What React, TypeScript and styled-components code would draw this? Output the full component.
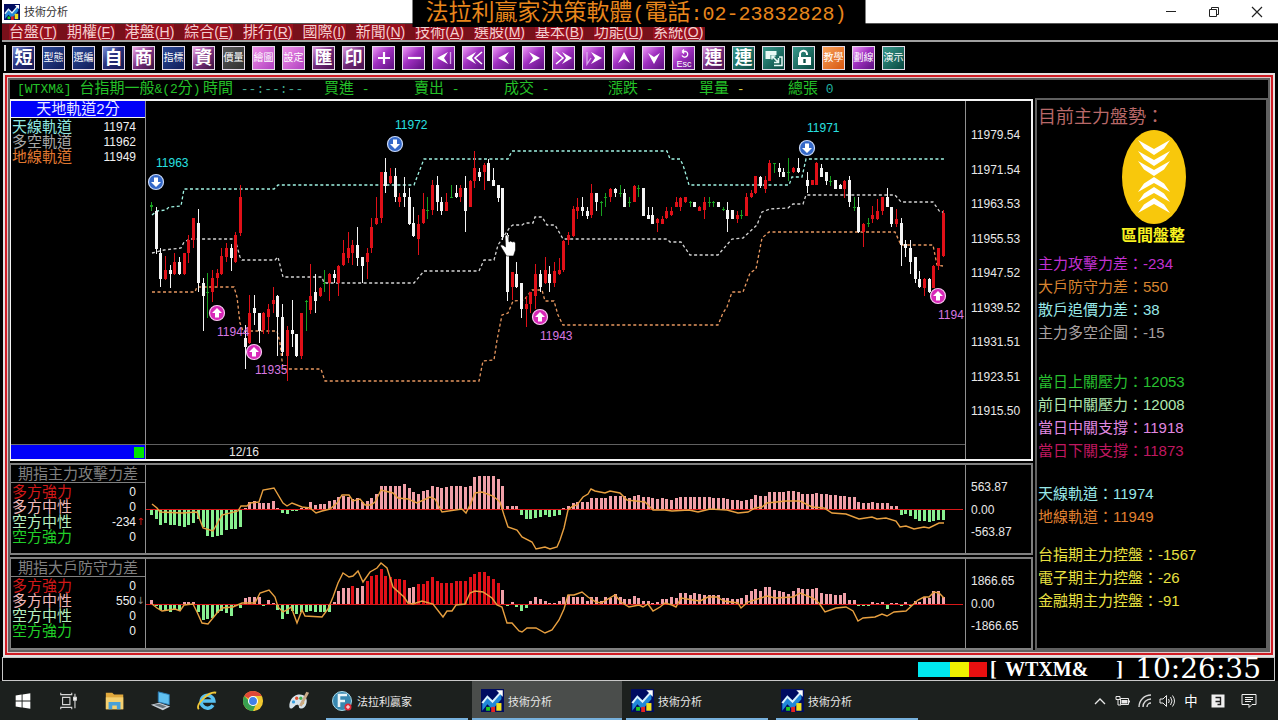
import React from 'react';
import styled, { createGlobalStyle } from 'styled-components';

const CJK = '"Liberation Sans", "Noto Sans CJK TC", sans-serif';
const MONO = '"Liberation Mono", "Noto Sans CJK TC", monospace';

const Global = createGlobalStyle`
  * { box-sizing: border-box; }
  body { margin: 0; background: #000; font-family: ${CJK}; font-size: 12px; color: #fff; }
  button { font-family: inherit; border: 0; padding: 0; background: none; color: inherit; cursor: pointer; }
  svg { display: block; }
  h2, p, dl, dd, dt, ul { margin: 0; padding: 0; font-weight: 400; list-style: none; }
`;

const Page = styled.div`
  position: relative;
  min-height: 100vh;
  display: flex;
  flex-direction: column;
  background: #000;
`;

/* ---------- title bar, banner, menu ---------- */

const TitleBar = styled.header`
  height: 24px;
  margin-left: 2px;
  display: flex;
  align-items: center;
  background: #fff;
  color: #333;
  border-bottom: 1px solid #555;
`;
const AppTitle = styled.h1`
  margin: 0 auto 0 4px;
  font-size: 11px;
  line-height: 16px;
  font-weight: 400;
`;
const WindowButton = styled.button`
  width: 43px;
  height: 23px;
  display: grid;
  place-items: center;
`;
const Banner = styled.div`
  position: absolute;
  top: 0;
  left: 50%;
  transform: translateX(-50%);
  width: 453px;
  height: 27px;
  padding: 2px 13px 0;
  background: #000;
  color: #e8861c;
  font: 23px/24px ${MONO};
  white-space: nowrap;
  overflow: hidden;
`;
const BannerLatin = styled.span`
  font-size: 20px;
`;
const MenuBar = styled.nav`
  height: 18px;
  margin-left: 2px;
  display: flex;
  border-bottom: 2px solid #a0a0a0;
`;
const MenuList = styled.div`
  display: flex;
  gap: 10px;
  height: 16px;
  padding: 0 2px 0 7px;
  background: #78101a;
`;
const MenuButton = styled.button`
  height: 16px;
  font-size: 15px;
  line-height: 16px;
  color: #f4cfd0;
  background: #98101e;
  white-space: nowrap;
  overflow: hidden;
`;
const Accel = styled.span`
  font-size: 14px;
`;

/* ---------- tool bar ---------- */

const ToolBar = styled.div`
  height: 31px;
  display: flex;
  align-items: center;
  gap: 7px;
  padding-left: 4px;
`;
const Grip = styled.span`
  width: 2px;
  height: 26px;
  margin-right: -1px;
  background: #d8d8d8;
`;
type Tone = 'navy' | 'blue' | 'rose' | 'gray' | 'pink' | 'plum' | 'violet' | 'teal' | 'orange';
const tones: Record<Tone, string> = {
  navy: 'linear-gradient(135deg, #2c4a98, #101c58)',
  blue: 'linear-gradient(135deg, #7890d8, #28307c 45%, #141850)',
  rose: 'linear-gradient(135deg, #f0a8e8, #7c3080 50%, #38103c)',
  gray: 'linear-gradient(135deg, #585858, #303030)',
  pink: 'linear-gradient(135deg, #f090e8, #b040c0)',
  plum: 'linear-gradient(135deg, #e098e0, #702878 50%, #48104c)',
  violet: 'linear-gradient(135deg, #f098f8, #a030c0 45%, #5c1080)',
  teal: 'linear-gradient(135deg, #38988c, #084840)',
  orange: 'linear-gradient(135deg, #f8a058, #d85810)',
};
const ToolButton = styled.button<{ $tone: Tone; $small?: boolean }>`
  width: 23px;
  height: 24px;
  display: grid;
  place-items: center;
  border: 1px solid #e4dce8;
  background: ${(p) => tones[p.$tone]};
  color: #fff;
  font-size: ${(p) => (p.$small ? 10 : 18)}px;
  font-weight: ${(p) => (p.$small ? 400 : 700)};
  line-height: 20px;
  white-space: nowrap;
  overflow: hidden;
`;

/* ---------- workspace frame ---------- */

const FrameOuter = styled.main`
  margin: 0 3px;
  flex: 1 0 auto;
  border: 2px solid #e4e0e0;
  display: flex;
`;
const FrameRed = styled.div`
  flex: 1;
  min-width: 0;
  border: 2px solid #d01c24;
  display: flex;
`;
const FrameInner = styled.div`
  flex: 1;
  min-width: 0;
  border: 1px solid #e0c8c8;
  display: flex;
`;
const Workspace = styled.div`
  flex: 1;
  min-width: 0;
  border: 2px solid #606060;
  display: flex;
  flex-direction: column;
`;
const QuoteBar = styled.div`
  height: 19px;
  display: flex;
  align-items: center;
  padding-left: 7px;
  font-family: ${MONO};
  font-size: 15px;
  line-height: 18px;
  color: #24c028;
  white-space: nowrap;
`;
const QuoteName = styled.span`
  width: 186px;
`;
const QuoteItem = styled.span<{ $w: number }>`
  width: ${(p) => p.$w}px;
`;
const Half = styled.span<{ $c?: string }>`
  font-size: 13px;
  white-space: pre;
  color: ${(p) => p.$c ?? 'inherit'};
`;
const Columns = styled.div`
  flex: 1;
  display: flex;
  gap: 2px;
`;
const Panes = styled.div`
  flex: 1;
  min-width: 0;
  display: flex;
  flex-direction: column;
  gap: 2px;
`;
const Pane = styled.section<{ $main?: boolean }>`
  display: flex;
  border: 2px solid ${(p) => (p.$main ? '#f4f4f4' : '#808080')};
  border-left-width: 1px;
`;
const Legend = styled.div`
  width: 135px;
  flex: none;
  display: flex;
  flex-direction: column;
  border-right: 1px solid #909090;
`;
const LegendTitle = styled.h2<{ $active?: boolean }>`
  height: ${(p) => (p.$active ? 17 : 18)}px;
  font-size: 15px;
  line-height: ${(p) => (p.$active ? 16 : 17)}px;
  text-align: center;
  background: ${(p) => (p.$active ? '#0000f8' : 'transparent')};
  color: ${(p) => (p.$active ? '#e8e8ff' : '#808080')};
  border-bottom: 1px solid ${(p) => (p.$active ? '#f4f4f4' : '#808080')};
`;
const LegendRows = styled.dl`
  padding: 1px 0 0 1px;
`;
const LegendRow = styled.div<{ $c: string }>`
  display: flex;
  justify-content: space-between;
  height: 15px;
  color: ${(p) => p.$c};
  dt { font-size: 15px; line-height: 15px; }
  dd { display: flex; color: #f0f0f0; font-size: 12px; line-height: 16px; }
`;
const Trend = styled.span<{ $c: string }>`
  width: 9px;
  text-align: center;
  font-family: "DejaVu Sans", sans-serif;
  font-size: 10px;
  color: ${(p) => p.$c};
`;
const Scroller = styled.div`
  height: 15px;
  margin-top: auto;
  display: flex;
  justify-content: flex-end;
  align-items: center;
  padding-right: 1px;
  border-top: 1px solid #707070;
  background: #0000f8;
`;
const ScrollThumb = styled.span`
  width: 10px;
  height: 11px;
  background: #00e800;
`;
const Plot = styled.div`
  flex: 1;
  min-width: 0;
  border-right: 1px solid #909090;
  svg { width: 100%; }
`;
const DateAxis = styled.div`
  height: 15px;
  padding-left: 83px;
  border-top: 1px solid #606060;
  line-height: 15px;
  color: #e8e8e8;
`;
const Axis = styled.ul<{ $tall?: boolean }>`
  width: 65px;
  flex: none;
  height: ${(p) => (p.$tall ? 320 : 78)}px;
  padding: ${(p) => (p.$tall ? 24 : 11)}px 0 0 5px;
  display: flex;
  flex-direction: column;
  justify-content: space-between;
  color: #e8e8e8;
  line-height: ${(p) => (p.$tall ? 20 : 22)}px;
`;

/* ---------- side panel ---------- */

const Side = styled.aside`
  width: 233px;
  flex: none;
  margin-top: -1px;
  border: 2px solid #606060;
  padding: 7px 0 0 1px;
`;
const SideTitle = styled.h2`
  font-size: 18px;
  line-height: 20px;
  color: #b86868;
`;
const Badge = styled.figure`
  width: 70px;
  margin: 3px 0 0 80px;
  text-align: center;
`;
const BadgeName = styled.figcaption`
  font-size: 16px;
  line-height: 24px;
  font-weight: 700;
  color: #f8f020;
  white-space: nowrap;
`;
const Group = styled.div<{ $top: number }>`
  margin-top: ${(p) => p.$top}px;
  font-size: 15px;
  line-height: 23px;
  white-space: nowrap;
`;
const Reading = styled.p<{ $c: string }>`
  color: ${(p) => p.$c};
`;

/* ---------- status and task bar ---------- */

const StatusBar = styled.footer`
  height: 24px;
  margin: 0 3px 0 2px;
  display: flex;
  justify-content: flex-end;
  align-items: center;
  border: 1px solid #c8c8c8;
  padding-right: 13px;
  white-space: nowrap;
`;
const Lamp = styled.span<{ $c: string; $w: number }>`
  width: ${(p) => p.$w}px;
  height: 15px;
  background: ${(p) => p.$c};
`;
const Contract = styled.span`
  width: 133px;
  margin-left: 3px;
  display: flex;
  justify-content: space-between;
  font: 700 20px/22px "Liberation Serif", serif;
  b { width: 103px; }
`;
const Clock = styled.time`
  width: 138px;
  text-align: right;
  font: 28px/22px "DejaVu Serif", serif;
`;
const TaskBar = styled.div`
  height: 39px;
  display: flex;
  background: #1c201e;
`;
const Launch = styled.button`
  width: 46px;
  display: grid;
  place-items: center;
`;
const Tasks = styled.div`
  display: flex;
  margin-right: auto;
`;
const Task = styled.button<{ $active?: boolean }>`
  width: 150px;
  display: flex;
  align-items: center;
  gap: 4px;
  padding-left: 9px;
  font-size: 11px;
  color: #e8e8e8;
  background:
    linear-gradient(#76b0dc, #76b0dc) ${(p) => (p.$active ? '0 100% / 150px 2px' : '4px 100% / 142px 2px')} no-repeat
    ${(p) => (p.$active ? '#4a4d4b' : 'transparent')};
`;
const Tray = styled.div`
  display: flex;
  align-items: center;
  padding-right: 12px;
  font-size: 12px;
`;
const TrayButton = styled.button<{ $w: number }>`
  width: ${(p) => p.$w}px;
  height: 30px;
  display: grid;
  place-items: center;
`;

/* ---------- data ---------- */

const menus: [string, string][] = [
  ['台盤', 'T'], ['期權', 'F'], ['港盤', 'H'], ['綜合', 'E'], ['排行', 'R'], ['國際', 'I'],
  ['新聞', 'N'], ['技術', 'A'], ['選股', 'M'], ['基本', 'B'], ['功能', 'U'], ['系統', 'O'],
];

type Glyph = 'plus' | 'minus' | 'first' | 'back2' | 'back' | 'fwd' | 'fwd2' | 'last' | 'up' | 'down' | 'esc' | 'swap' | 'lock';
const tools: { t?: string; g?: Glyph; tone: Tone }[] = [
  { t: '短', tone: 'blue' }, { t: '型態', tone: 'navy' }, { t: '選編', tone: 'navy' }, { t: '自', tone: 'blue' },
  { t: '商', tone: 'rose' }, { t: '指標', tone: 'navy' }, { t: '資', tone: 'rose' }, { t: '價量', tone: 'gray' },
  { t: '繪圖', tone: 'pink' }, { t: '設定', tone: 'pink' }, { t: '匯', tone: 'plum' }, { t: '印', tone: 'plum' },
  { g: 'plus', tone: 'violet' }, { g: 'minus', tone: 'violet' }, { g: 'first', tone: 'violet' },
  { g: 'back2', tone: 'violet' }, { g: 'back', tone: 'violet' }, { g: 'fwd', tone: 'violet' },
  { g: 'fwd2', tone: 'violet' }, { g: 'last', tone: 'violet' }, { g: 'up', tone: 'violet' },
  { g: 'down', tone: 'violet' }, { g: 'esc', tone: 'violet' }, { t: '連', tone: 'plum' },
  { t: '連', tone: 'teal' }, { g: 'swap', tone: 'teal' }, { g: 'lock', tone: 'teal' },
  { t: '教學', tone: 'orange' }, { t: '劃線', tone: 'violet' }, { t: '演示', tone: 'teal' },
];

// One candle per entry: colour, high, body top, body bottom, low (thirds of a pixel below the 110 line).
const candles = `G275,285,290,302 W290,302,416,432 W415,430,508,532 R438,480,508,510 W465,480,493,533 R430,455,493,495
W440,455,493,495 R428,430,493,495 R375,390,430,460 R325,325,390,413 W298,340,520,545 W505,518,557,662 G490,545,548,625
R480,505,547,575 R478,490,505,532 R413,437,493,495 R400,415,440,455 W403,415,443,483 R367,375,455,460 R225,262,368,378
W645,685,712,776 R555,610,700,702 W555,595,610,645 W610,610,662,698 R607,610,660,672 R583,597,620,672 R532,570,582,610
W555,557,622,738 W583,622,725,738 R648,660,738,812 W570,660,673,712 W672,672,738,740 R608,610,738,748 G570,573,576,662
R462,558,600,612 W492,545,572,610 R530,533,557,560 G480,518,521,545 R490,492,518,572 W480,492,505,520 R465,467,518,557
R390,430,465,467 R365,415,443,460 R390,405,430,465 W350,405,443,467 W440,440,467,520 R415,428,455,508 R325,350,415,430
R260,325,342,345 R185,185,325,340 W145,185,227,250 R175,198,220,222 W175,198,262,277 R248,262,275,290 W200,250,262,290
W235,262,342,344 W290,340,378,380 R315,342,388,435 R248,298,340,342 G262,300,303,328 R210,225,300,315 W198,225,275,302
W262,275,302,315 R250,277,302,304 G225,262,265,265 W225,250,262,264 R225,235,262,277 W198,235,302,365 R210,212,290,292
R122,173,212,235 W175,185,200,212 R160,165,185,240 W148,160,212,214 W175,210,227,229 W225,225,265,277 W235,235,380,390
W370,375,547,573 R485,487,532,570 W455,492,532,534 W520,520,597,623 R558,582,597,652 R545,547,583,610 R463,492,557,597
W480,492,532,545 R440,480,520,522 W467,492,520,545 R455,482,520,532 R443,480,493,495 R390,392,480,485 R367,375,390,405
R288,298,378,380 R265,290,303,328 W262,290,302,318 W290,302,318,328 R222,250,315,325 W250,250,275,302 G273,275,278,318
G250,262,265,290 R235,238,262,275 W235,237,250,262 G225,250,253,262 W237,250,290,292 G262,275,278,290 R225,227,275,277
G225,235,238,262 W235,235,317,318 W290,315,327,328 W290,315,341,342 R325,327,340,365 R318,327,341,342 R292,302,325,327
R290,302,315,317 R262,275,290,292 R262,265,290,302 R262,262,277,278 G273,275,278,290 W275,275,290,291 R288,290,302,303
R262,275,300,328 G262,275,278,290 G273,275,278,290 W277,277,290,291 G290,298,301,302 W275,300,327,365 W300,300,327,328
R302,315,328,340 G300,315,318,328 R250,262,317,318 R240,248,262,263 R198,198,250,251 W198,200,227,235 R198,210,237,250
R150,160,212,213 G160,160,163,190 W160,173,187,200 W173,185,200,201 G145,185,188,212 R170,175,187,188 W145,175,187,188
- W185,210,227,250 R210,210,225,226 R155,160,225,226 W162,175,200,201 W185,185,212,225 G198,212,215,228 W210,210,237,238
W223,225,237,238 R210,212,237,265 W198,210,275,290 G262,290,293,302 W262,290,367,368 R340,342,367,410 G325,340,343,352
R288,315,328,340 R267,302,328,330 R262,262,302,315 W235,260,290,291 W290,290,342,352 R298,328,342,352 W325,340,405,467
W390,402,415,440 W390,415,455,493 W440,442,507,520 W482,507,532,533 R503,507,533,557 W503,507,547,548 R465,467,533,534
R413,415,467,480 R300,308,437,440`.split(/\s+/);

const upperBand = '152,215 157,211 166,210 169,207 181,206 184,189 274,189 278,185 414,185 424,159 508,159 512,151 667,151 670,159 680,159 683,165 687,178 689,185 789,185 792,177 802,177 806,159 944,159';
const middleBand = '152,253 164,250 181,248 184,242 190,239 235,239 240,257 242,260 275,260 278,257 283,277 322,277 324,283 414,283 424,271 479,271 484,260 494,260 498,245 510,227 513,225 522,225 525,223 533,223 535,217 542,217 547,225 555,225 563,239 667,239 670,242 681,242 690,255 718,255 732,239 743,238 757,225 762,212 770,209 788,208 793,204 803,204 806,195 895,195 901,202 933,202 940,212 943,212';
const lowerBand = '152,292 195,292 197,287 234,287 237,297 240,323 243,331 277,331 280,343 283,369 321,369 325,381 479,381 483,361 494,360 497,340 502,315 508,313 513,301 524,300 532,290 542,290 545,301 554,301 558,315 563,325 718,325 723,313 727,307 732,292 743,292 750,273 756,269 762,238 769,232 895,232 901,245 933,245 937,265 943,266';

const attackBars = [
  -14, -28, -46, -40, -46, -46, -48, -50, -44, -38, -28, -50, -78, -80, -78, -76, -60, -56, -58, -52,
  3, 20, 23, 17, 17, 17, 24, 4, -8, -12, -4, -3, 3, 5, 20, 12, 14, 16, 24, 28,
  36, 40, 36, 30, 32, 22, 24, 32, 45, 68, 70, 70, 70, 68, 76, 64, 52, 46, 54, 57,
  68, 66, 64, 66, 68, 69, 70, 66, 70, 97, 100, 100, 100, 100, 90, 68, 10, 10, 10, -14,
  -26, -26, -23, -22, -16, -20, -17, -15, 4, 10, 18, 20, 22, 22, 34, 33, 32, 34, 38, 38,
  38, 38, 34, 40, 43, 35, 35, 32, 30, 33, 30, 28, 34, 35, 35, 35, 35, 35, 35, 35,
  34, 33, 33, 30, 28, 26, 25, 28, 30, 43, 40, 40, 52, 52, 52, 52, 55, 55, 52, 46,
  44, 44, 47, 46, 44, 43, 43, 40, 38, 37, 35, 22, 18, 18, 20, 18, 18, 18, 10, 10,
  -14, -12, -18, -26, -32, -34, -36, -32, -30, -30,
];
const defendBars = [
  12, -3, -14, -18, -20, -16, -18, 5, 6, 6, -20, -44, -42, -40, -24, -18, -24, -32, -3, -10,
  18, 20, 22, 20, -3, 12, 4, -16, -42, -28, -18, -26, -20, -22, -18, -22, -22, -22, -20, 6,
  40, 48, 48, 54, 48, 54, 68, 84, 88, 105, 84, 82, 74, 74, 72, 48, 50, 60, 60, 68,
  82, 68, 62, 62, 62, 68, 70, 68, 80, 90, 95, 96, 84, 74, 62, 42, -3, 6, -6, -18,
  -10, 8, 20, 16, 10, 4, 4, 8, 22, 26, 22, 22, 20, 10, 22, 20, 10, 20, 18, 30,
  22, 16, 14, 24, 18, 10, 10, 3, 6, 14, 16, 20, 18, 32, 32, 26, 32, 30, 26, 28,
  26, 26, 18, 18, 14, 16, 18, 26, 38, 46, 38, 52, 52, 42, 38, 36, 30, 38, 48, 46,
  44, 44, 48, 34, 30, 30, 28, 28, 32, 12, 12, -4, -3, -3, 7, 3, 5, -12, 2, 3,
  -3, 6, -3, 8, 6, 20, 18, 40, 40, 22,
];
const attackLine = '152,504 157,508 160,512 182,513 197,512 203,528 213,531 222,515 238,511 241,506 247,506 250,503 259,502 263,490 274,488 283,503 287,506 292,503 302,507 310,508 316,513 322,511 330,509 337,503 342,495 349,495 353,501 360,499 365,505 371,505 375,502 381,490 393,493 398,498 408,499 417,503 430,497 435,499 442,512 462,509 466,513 471,503 475,493 482,492 493,496 500,502 504,515 508,527 517,530 522,537 532,542 536,549 545,547 550,549 557,547 560,540 564,528 568,510 573,506 577,505 583,497 588,494 591,489 595,491 605,493 610,491 620,493 627,500 645,502 653,510 665,510 672,511 689,510 698,512 710,509 727,510 738,513 748,512 755,508 762,507 767,503 786,501 800,501 812,507 824,508 832,513 846,514 859,519 872,517 877,519 886,518 896,521 900,527 906,526 914,529 924,527 929,528 939,523 944,523';
const defendLine = '152,604 157,608 162,611 175,609 180,611 184,605 193,604 197,612 202,623 208,624 217,613 222,608 233,607 242,603 255,603 260,593 269,590 275,597 278,607 283,612 287,610 291,607 293,612 297,623 302,610 305,616 322,617 328,609 333,597 338,583 343,573 349,577 353,576 358,571 363,582 370,572 377,568 381,563 387,568 393,587 404,597 408,603 413,604 422,601 433,604 443,617 447,611 452,611 456,605 465,604 470,593 475,591 483,592 492,598 497,605 502,607 507,623 512,623 519,631 522,632 527,628 536,628 545,633 552,630 559,620 564,609 568,595 574,595 582,592 588,597 596,602 601,603 615,595 621,602 629,607 639,605 643,607 648,604 653,611 660,607 665,603 672,605 676,607 681,598 693,600 700,601 708,597 717,597 724,601 738,603 741,608 748,602 767,596 775,598 793,597 800,593 813,598 819,603 825,612 836,608 846,607 853,611 858,621 863,618 875,617 882,614 887,616 894,612 906,611 918,600 924,597 929,597 934,592 939,593 944,598';

const slotX = (i: number) => Math.round(150 + i * 4.685);
const candleColor: Record<string, string> = { R: '#e01018', W: '#f4f4f4', G: '#18a020' };

/* ---------- drawings ---------- */

const AppIcon = ({ size = 16 }: { size?: number }) => (
  <svg width={size} height={size} viewBox="0 0 18 18">
    <rect width="18" height="18" fill="#000c60" />
    <path d="M1 12 5 7l4 4 7-8v5l-7 8-4-4-4 5z" fill="#2088d8" />
    <path d="M1 11 5 6l4 4 7-8" fill="none" stroke="#d8f4ff" strokeWidth="1.600" />
    <path d="M12 1h5v5z" fill="#fff" />
    <rect x="4" y="14" width="3" height="3" fill="#20d020" />
    <rect x="8" y="14" width="3" height="4" fill="#e82020" />
    <rect x="12" y="11" width="4" height="6" fill="#f0e020" />
  </svg>
);

const glyphPaths: Record<Exclude<Glyph, 'esc' | 'swap' | 'lock'>, React.ReactNode> = {
  plus: <path d="M10 4v12M4 10h12" stroke="#fff" strokeWidth="2.200" />,
  minus: <path d="M4 10h13" stroke="#fff" strokeWidth="2.200" />,
  first: <><path d="M14 4 3 10l11 6-4-6z" fill="#fff" /><path d="M16.500 4v12" stroke="#d8a8e8" strokeWidth="1.300" /></>,
  back2: <><path d="M12 4 2 10l10 6-4-6z" fill="#fff" /><path d="m18 4-7 6 7 6" fill="none" stroke="#fff" strokeWidth="1.600" /></>,
  back: <path d="M15 4 4 10l11 6-4-6z" fill="#fff" />,
  fwd: <path d="m5 4 11 6-11 6 4-6z" fill="#fff" />,
  fwd2: <><path d="m8 4 10 6-10 6 4-6z" fill="#fff" /><path d="m2 4 7 6-7 6" fill="none" stroke="#fff" strokeWidth="1.600" /></>,
  last: <><path d="m7 4 11 6-11 6 4-6z" fill="#fff" /><path d="M3 4v12l4-6" fill="none" stroke="#d8a8e8" strokeWidth="1.300" /></>,
  up: <path d="m4 15 6-11 6 11-6-4z" fill="#fff" />,
  down: <path d="m4 5 6 11 6-11-6 4z" fill="#fff" />,
};

const ToolGlyph = ({ g }: { g: Glyph }) => {
  if (g === 'esc')
    return (
      <svg width="20" height="20" viewBox="0 0 20 20">
        <path d="M8 3.500h4a3 3 0 1 1-4 4M8 3.500l2-2m-2 2 2 2" fill="none" stroke="#fff" strokeWidth="1.300" />
        <text x="10" y="19" fontSize="9" fill="#fff" textAnchor="middle" fontWeight="400">Esc</text>
      </svg>
    );
  if (g === 'swap')
    return (
      <svg width="20" height="20" viewBox="0 0 20 20" fill="none">
        <path d="M1.500 3h11v4h-6v4h-5z" fill="#e8f8f4" />
        <path d="M10 17.500h8V9h-3" stroke="#e8f8f4" strokeWidth="1.500" />
        <path d="m8 8 6.500 6.500M14.500 10v4.500H10M8 11.500V8h3.500" stroke="#e8f8f4" strokeWidth="1.600" />
      </svg>
    );
  if (g === 'lock')
    return (
      <svg width="20" height="20" viewBox="0 0 20 20">
        <path d="M6 10V6.500a3.500 3.500 0 0 1 7-.5v1" fill="none" stroke="#fff" strokeWidth="2" />
        <rect x="4" y="9" width="13" height="8" fill="#fff" />
        <path d="M10.500 11v4" stroke="#0c5048" strokeWidth="2.400" />
      </svg>
    );
  return <svg width="20" height="20" viewBox="0 0 20 20">{glyphPaths[g]}</svg>;
};

const Marker = ({ x, y, down }: { x: number; y: number; down?: boolean }) => (
  <g transform={`translate(${x} ${y})`}>
    <circle r="7.500" fill={down ? '#3468c8' : '#d828b8'} stroke={down ? '#c8d8f8' : '#f8c8f0'} strokeWidth="1.200" />
    <path d="M-2-4.500h4V0h3L0 5-5 0h3z" fill="#fff" transform={down ? undefined : 'rotate(180)'} />
  </g>
);

const PriceChart = () => (
  <svg height="343" viewBox="146 101 819 343" fontSize="12" role="img" aria-label="天地軌道2分">
    <g fill="none" strokeWidth="1.300" strokeDasharray="3 2.500">
      <polyline points={upperBand} stroke="#a0f4e4" />
      <polyline points={middleBand} stroke="#d4d4d4" />
      <polyline points={lowerBand} stroke="#e89860" />
    </g>
    <g shapeRendering="crispEdges">
      {candles.map((c, i) => {
        if (c === '-') return null;
        const [hi, top, bottom, lo] = c.slice(1).split(',').map((v) => Math.round(110 + Number(v) / 3));
        const x = slotX(i);
        const fill = candleColor[c[0]];
        return (
          <g key={i} fill={fill}>
            <rect x={x + 1} y={hi} width="1" height={Math.max(1, lo - hi)} />
            <rect x={x} y={top} width="3" height={Math.max(1, bottom - top)} />
          </g>
        );
      })}
    </g>
    <Marker x={156} y={182} down />
    <Marker x={395} y={144} down />
    <Marker x={807} y={148} down />
    <Marker x={217} y={313} />
    <Marker x={254} y={352} />
    <Marker x={540} y={317} />
    <Marker x={938} y={296} />
    <g fill="#28e0e0">
      <text x="156" y="167">11963</text>
      <text x="395" y="129">11972</text>
      <text x="807" y="132">11971</text>
    </g>
    <g fill="#d878e0">
      <text x="217" y="336">11944</text>
      <text x="255" y="374">11935</text>
      <text x="540" y="340">11943</text>
      <text x="938" y="319">1194</text>
    </g>
    <path
      d="M505 236q1.500-2 3 0l1 6 1.500-1 2 1 1.500-.5 1.500 1.500v7l-2 6h-7l-3-5-3-5q1-2 3-.5l2 1.500z"
      fill="#fff" stroke="#000" strokeWidth=".6"
    />
  </svg>
);

type IndicatorProps = {
  top: number; height: number; zero: number; bars: number[]; line: string; label: string; strong?: (i: number) => boolean;
};
const IndicatorChart = ({ top, height, zero, bars, line, label, strong }: IndicatorProps) => (
  <svg height={height} viewBox={`146 ${top} 819 ${height}`} role="img" aria-label={label}>
    <g shapeRendering="crispEdges">
      {bars.map((v, i) => {
        const h = Math.max(1, Math.round(Math.abs(v) / 3));
        return (
          <rect
            key={i} x={slotX(i)} width="3" height={h} y={v > 0 ? zero - h : zero + 1}
            fill={v < 0 ? '#88f090' : strong?.(i) ? '#e01018' : '#f0a0a8'}
          />
        );
      })}
      <rect x="146" y={zero} width="817" height="1" fill="#d81818" />
    </g>
    <polyline points={line} fill="none" stroke="#e8a040" strokeWidth="1.400" />
  </svg>
);

const isStrong = (i: number) => i === 43 || (i >= 46 && i <= 54) || (i >= 57 && i <= 74);

const forces: [string, string][] = [
  ['多方強力', '#d01818'], ['多方中性', '#f0b8b8'], ['空方中性', '#b8f0c0'], ['空方強力', '#20d028'],
];

const ForceLegend = ({ title, values, arrowAt, arrow }: { title: string; values: string[]; arrowAt: number; arrow: React.ReactNode }) => (
  <Legend>
    <LegendTitle>{title}</LegendTitle>
    <LegendRows>
      {forces.map(([name, color], i) => (
        <LegendRow key={name} $c={color}>
          <dt>{name}</dt>
          <dd>{values[i]}{i === arrowAt ? arrow : <Trend $c="inherit" />}</dd>
        </LegendRow>
      ))}
    </LegendRows>
  </Legend>
);

const readings: { top: number; rows: [string, string][] }[] = [
  { top: 4, rows: [['主力攻擊力差：-234', '#c030d0'], ['大戶防守力差：550', '#d88430'], ['散戶追價力差：38', '#98e8e8'], ['主力多空企圖：-15', '#a8a0a0']] },
  { top: 26, rows: [['當日上關壓力：12053', '#28c030'], ['前日中關壓力：12008', '#b0e8b0'], ['當日中關支撐：11918', '#e088e0'], ['當日下關支撐：11873', '#c01860']] },
  { top: 20, rows: [['天線軌道：11974', '#98e8e8'], ['地線軌道：11949', '#e08030']] },
  { top: 15, rows: [['台指期主力控盤：-1567', '#e8e040'], ['電子期主力控盤：-26', '#e8e040'], ['金融期主力控盤：-91', '#e8e040']] },
];

const launchers: { name: string; art: React.ReactNode }[] = [
  { name: '開始', art: <path d="M4 6 10.500 5V11.500H4zM11.500 4.800 20 3.500V11.500H11.500zM4 12.500H10.500V19L4 18zM11.500 12.500H20V20.500L11.500 19.200z" fill="#fff" /> },
  {
    name: '工作檢視',
    art: <g fill="none" stroke="#d8d8d8" strokeWidth="1.200"><path d="M5 8h8v8H5zM3 3v2h12V3M3 21v-2h12v2M18.500 4v16" /><path d="M17 8h3v3h-3z" fill="#fff" /></g>,
  },
  {
    name: '檔案總管',
    art: <g><path d="M2 3h7l2 2h10v16H2z" fill="#e0a83c" /><path d="M2 8h19v13H2z" fill="#f4d070" /><path d="M5 21v-8h13v8h-4v-4H9v4z" fill="#48a0d8" /></g>,
  },
  {
    name: '電腦',
    art: <g><path d="m9 2 12 3v11L9 13z" fill="#60c0f0" stroke="#2878b0" /><path d="m1 16 9-2 12 4-8 4z" fill="#c8d0d8" /><path d="m4 16 6-1 8 3-4 2z" fill="#68747c" /></g>,
  },
  {
    name: 'Internet Explorer',
    art: <g fill="none"><path d="M18.500 16.500a7 7 0 1 1 1-4.500H7" stroke="#58c0f0" strokeWidth="3.800" /><path d="M3 21C-1 16 14 1 22 3" stroke="#f0c838" strokeWidth="2" /></g>,
  },
  {
    name: 'Chrome',
    art: (
      <g>
        <circle cx="12" cy="12" r="11" fill="#f0c830" />
        <path d="M12 12 2.500 6.500A11 11 0 0 1 21.500 6.500H12z" fill="#e04838" />
        <path d="M2.500 6.500A11 11 0 0 0 12 23l4-9-4 2z" fill="#38a050" />
        <circle cx="12" cy="12" r="5.500" fill="#fff" /><circle cx="12" cy="12" r="4.300" fill="#4080e8" />
      </g>
    ),
  },
  {
    name: '小畫家',
    art: (
      <g>
        <path d="M11 5c7-1 11 4 9 10-1 4-4 6-7 5-2-1 0-4-3-4s-4 5-8 4c-2-5 2-14 9-15z" fill="#d8e4ec" />
        <circle cx="6" cy="13" r="1.800" fill="#38a0e0" /><circle cx="9.500" cy="9" r="1.800" fill="#e05030" />
        <circle cx="14" cy="9" r="1.800" fill="#40b050" /><circle cx="16" cy="14" r="1.800" fill="#e8b830" />
        <path d="m12 17 8-15 3 1-8 15z" fill="#c8a888" />
      </g>
    ),
  },
];

export default function App() {
  return (
    <Page>
      <Global />
      <TitleBar>
        <svg width="2" height="16" aria-hidden="true" />
        <AppIcon />
        <AppTitle>技術分析</AppTitle>
        <WindowButton aria-label="最小化"><svg width="12" height="12"><path d="M1 5.500h10" stroke="#222" /></svg></WindowButton>
        <WindowButton aria-label="還原">
          <svg width="12" height="12" fill="none" stroke="#222"><path d="M1.500 3.500h7v7h-7zM3.500 3V1.500h7v7H9" /></svg>
        </WindowButton>
        <WindowButton aria-label="關閉"><svg width="12" height="12"><path d="m1 1 10 10M11 1 1 11" stroke="#222" strokeWidth="1.200" /></svg></WindowButton>
      </TitleBar>
      <MenuBar>
        <MenuList>
          {menus.map(([name, key]) => (
            <MenuButton key={name}>{name}<Accel>(<u>{key}</u>)</Accel></MenuButton>
          ))}
        </MenuList>
      </MenuBar>
      <Banner>
        法拉利贏家決策軟體<BannerLatin>(</BannerLatin>電話<BannerLatin>:02-23832828)</BannerLatin>
      </Banner>

      <ToolBar>
        <Grip />
        {tools.map((tool, i) => (
          <ToolButton key={i} $tone={tool.tone} $small={tool.t?.length === 2} aria-label={tool.t ?? tool.g}>
            {tool.t ?? <ToolGlyph g={tool.g!} />}
          </ToolButton>
        ))}
      </ToolBar>

      <FrameOuter><FrameRed><FrameInner>
        <Workspace>
          <QuoteBar>
            <QuoteName><Half>{'[WTXM&] '}</Half>台指期一般<Half>&(2</Half>分<Half>)</Half></QuoteName>
            <QuoteItem $w={121}>時間<Half $c="#40a890">{' --:--:--'}</Half></QuoteItem>
            <QuoteItem $w={90}>買進<Half>{' -'}</Half></QuoteItem>
            <QuoteItem $w={90}>賣出<Half>{' -'}</Half></QuoteItem>
            <QuoteItem $w={104}>成交<Half>{' -'}</Half></QuoteItem>
            <QuoteItem $w={91}>漲跌<Half>{' -'}</Half></QuoteItem>
            <QuoteItem $w={89}>單量<Half $c="#d8d040">{' -'}</Half></QuoteItem>
            <QuoteItem $w={60}>總張<Half $c="#20b0a0">{' 0'}</Half></QuoteItem>
          </QuoteBar>
          <Columns>
            <Panes>
              <Pane $main>
                <Legend>
                  <LegendTitle $active>天地軌道2分</LegendTitle>
                  <LegendRows>
                    <LegendRow $c="#90e8e0"><dt>天線軌道</dt><dd>11974<Trend $c="inherit" /></dd></LegendRow>
                    <LegendRow $c="#a8a8a8"><dt>多空軌道</dt><dd>11962<Trend $c="inherit" /></dd></LegendRow>
                    <LegendRow $c="#e07830"><dt>地線軌道</dt><dd>11949<Trend $c="inherit" /></dd></LegendRow>
                  </LegendRows>
                  <Scroller><ScrollThumb /></Scroller>
                </Legend>
                <Plot>
                  <PriceChart />
                  <DateAxis>12/16</DateAxis>
                </Plot>
                <Axis $tall>
                  {['11979.54', '11971.54', '11963.53', '11955.53', '11947.52', '11939.52', '11931.51', '11923.51', '11915.50'].map((v) => (
                    <li key={v}>{v}</li>
                  ))}
                </Axis>
              </Pane>
              <Pane>
                <ForceLegend title="期指主力攻擊力差" values={['0', '0', '-234', '0']} arrowAt={2} arrow={<Trend $c="#d01818">↑</Trend>} />
                <Plot>
                  <IndicatorChart top={465} height={88} zero={509} bars={attackBars} line={attackLine} label="期指主力攻擊力差" />
                </Plot>
                <Axis><li>563.87</li><li>0.00</li><li>-563.87</li></Axis>
              </Pane>
              <Pane>
                <ForceLegend title="期指大戶防守力差" values={['0', '550', '0', '0']} arrowAt={1} arrow={<Trend $c="#909090">↓</Trend>} />
                <Plot>
                  <IndicatorChart top={559} height={89} zero={604} bars={defendBars} line={defendLine} label="期指大戶防守力差" strong={isStrong} />
                </Plot>
                <Axis><li>1866.65</li><li>0.00</li><li>-1866.65</li></Axis>
              </Pane>
            </Panes>
            <Side>
              <SideTitle>目前主力盤勢：</SideTitle>
              <Badge>
                <svg width="70" height="94" viewBox="0 0 70 94">
                  <ellipse cx="36" cy="47" rx="32" ry="47" fill="#f8c80c" />
                  <g fill="#fff">
                    {[10, 21, 31].map((y) => <path key={y} d={`M20 ${y}l16 9 16-9-6 8.500L36 ${y + 15}l-10-6.500z`} />)}
                    {[83, 72, 62].map((y) => <path key={y} d={`M20 ${y}l16-9 16 9-6-8.500L36 ${y - 15}l-10 6.500z`} />)}
                  </g>
                </svg>
                <BadgeName>區間盤整</BadgeName>
              </Badge>
              {readings.map((group, i) => (
                <Group key={i} $top={group.top}>
                  {group.rows.map(([text, color]) => <Reading key={text} $c={color}>{text}</Reading>)}
                </Group>
              ))}
            </Side>
          </Columns>
        </Workspace>
      </FrameInner></FrameRed></FrameOuter>

      <StatusBar>
        <Lamp $c="#00e8f0" $w={32} />
        <Lamp $c="#f0f000" $w={19} />
        <Lamp $c="#e81010" $w={18} />
        <Contract>[ <b>WTXM&</b>]</Contract>
        <Clock>10:26:35</Clock>
      </StatusBar>
      <TaskBar>
        {launchers.map((l) => (
          <Launch key={l.name} aria-label={l.name}><svg width="22" height="22" viewBox="0 0 24 24">{l.art}</svg></Launch>
        ))}
        <Tasks>
          <Task>
            <svg width="22" height="22" viewBox="0 0 22 22">
              <circle cx="11" cy="11" r="9.500" fill="#3888b0" stroke="#a8d8e8" />
              <path d="M8 17V5h8M8 11h6" fill="none" stroke="#e8f4f8" strokeWidth="2.600" />
              <circle cx="17" cy="17" r="3.500" fill="#e02838" /><path d="M15 17h4M17 15v4" stroke="#fff" />
            </svg>
            法拉利贏家
          </Task>
          <Task $active><AppIcon size={23} />技術分析</Task>
          <Task><AppIcon size={23} />技術分析</Task>
          <Task><AppIcon size={23} />技術分析</Task>
        </Tasks>
        <Tray>
          <TrayButton $w={24} aria-label="顯示隱藏的圖示"><svg width="12" height="12"><path d="m1 9 5-5 5 5" fill="none" stroke="#e8e8e8" strokeWidth="1.300" /></svg></TrayButton>
          <TrayButton $w={22} aria-label="電池">
            <svg width="16" height="14" fill="none" stroke="#e8e8e8"><path d="M5.500 4.500h8v6h-8zM14.500 6.500v2M1 2.500h4v3H1zM3 6v5h3" /><path d="M6.500 6h6v3.500h-6z" fill="#e8e8e8" stroke="none" /></svg>
          </TrayButton>
          <TrayButton $w={22} aria-label="網路">
            <svg width="14" height="14" fill="none" stroke="#d8d8d8"><path d="M1 13A12 12 0 0 1 13 1M5 13a8 8 0 0 1 8-8M9 13a4 4 0 0 1 4-4" strokeWidth="1.400" /></svg>
          </TrayButton>
          <TrayButton $w={22} aria-label="音量">
            <svg width="16" height="14" fill="none" stroke="#e8e8e8"><path d="M1 5h3l3.500-3.500v11L4 9H1zM9.500 5q1.500 2 0 4M11.500 3q3 4 0 8M13.500 1.500q4 5.500 0 11" /></svg>
          </TrayButton>
          <TrayButton $w={26} aria-label="輸入法">中</TrayButton>
          <TrayButton $w={28} aria-label="注音">
            <svg width="14" height="14"><path d="M.5.500h13v13H.5z" fill="#f0f0f0" /><path d="M4.500 3.500h5v4h-5M9.500 7.500v3h-3" fill="none" stroke="#222" strokeWidth="1.400" /></svg>
          </TrayButton>
          <TrayButton $w={34} aria-label="通知">
            <svg width="16" height="15" fill="none" stroke="#f0f0f0"><path d="M1 1.500h14v10h-4l-3 3v-3H1z" /><path d="M4 4.500h8M4 6.500h8M4 8.500h6" /></svg>
          </TrayButton>
        </Tray>
      </TaskBar>
    </Page>
  );
}
